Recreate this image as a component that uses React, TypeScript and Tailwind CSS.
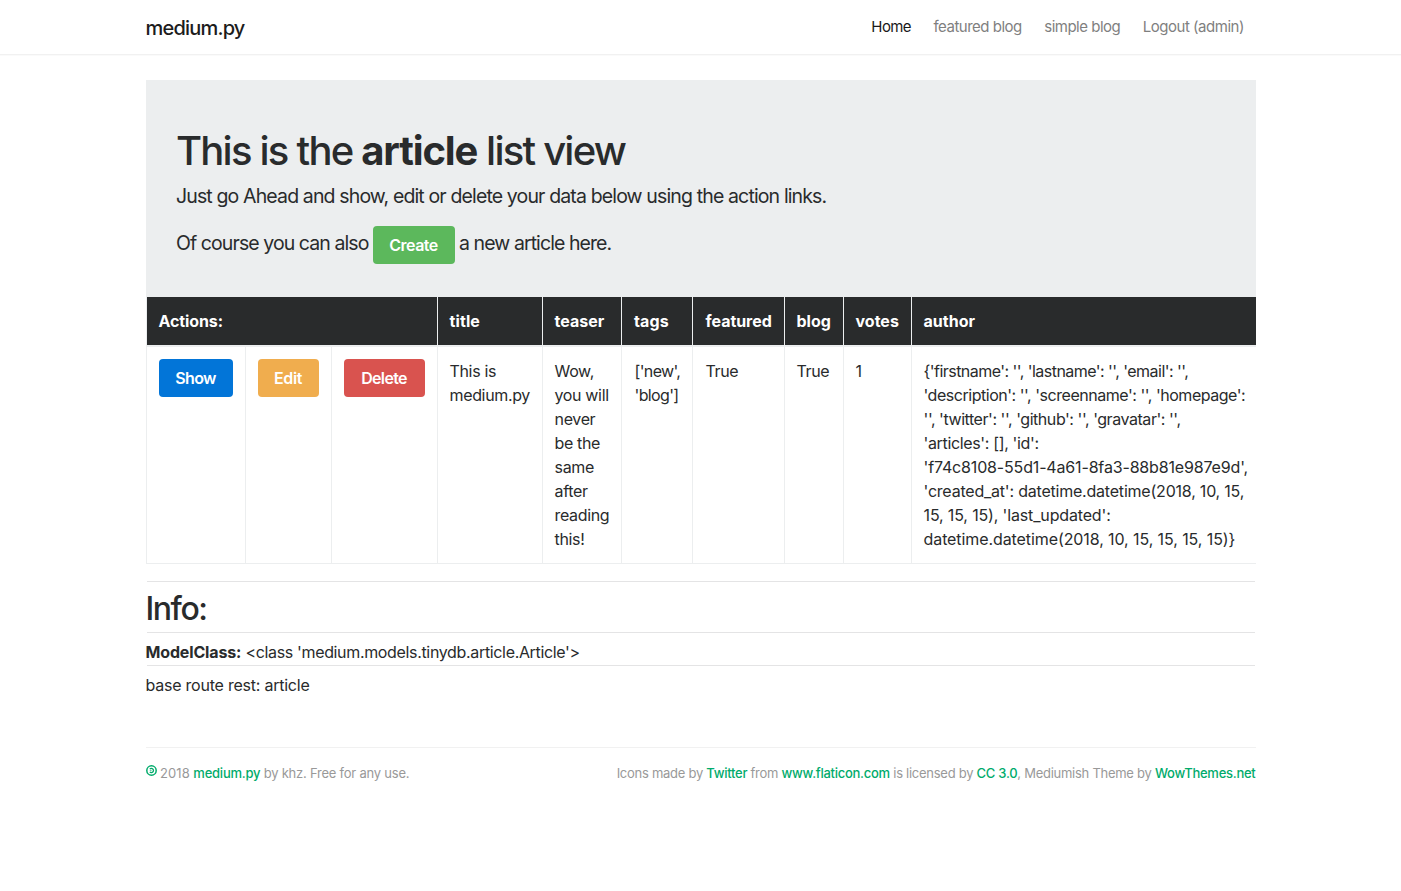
import type { ReactNode } from "react";

const columns = [
  { name: "title", style: "pl-3 tracking-[0.1px]" },
  { name: "teaser", style: "pl-3 tracking-[0px]" },
  { name: "tags", style: "pl-[12.5px] tracking-[0.1px]" },
  { name: "featured", style: "pl-[13px] tracking-[-0.05px]" },
  { name: "blog", style: "pl-3 tracking-[0px]" },
  { name: "votes", style: "pl-3 tracking-[0px]" },
  { name: "author", style: "pl-3 tracking-[0px]" },
];

const columnWidths = [99, 86, 106, 105, 79, 71, 92, 59, 68, 345];

const cells = [
  { style: "pl-3 tracking-[-0.35px]", lines: ["This is", "medium.py"] },
  {
    style: "pl-3 tracking-[-0.35px]",
    lines: ["Wow,", "you will", "never", "be the", "same", "after", "reading", "this!"],
  },
  { style: "pl-[13px] tracking-[-0.65px]", lines: ["['new',", "'blog']"] },
  { style: "pl-[13px] tracking-[-0.4px]", lines: ["True"] },
  { style: "pl-3 tracking-[-0.4px]", lines: ["True"] },
  { style: "pl-3 tracking-[-0.3px]", lines: ["1"] },
];

const authorLines = [
  { text: "{'firstname': '', 'lastname': '', 'email': '',", tracking: "tracking-[-0.54px]" },
  { text: "'description': '', 'screenname': '', 'homepage':", tracking: "tracking-[-0.47px]" },
  { text: "'', 'twitter': '', 'github': '', 'gravatar': '',", tracking: "tracking-[-0.45px]" },
  { text: "'articles': [], 'id':", tracking: "tracking-[-0.35px]" },
  { text: "'f74c8108-55d1-4a61-8fa3-88b81e987e9d',", tracking: "tracking-[-0.16px]" },
  { text: "'created_at': datetime.datetime(2018, 10, 15,", tracking: "tracking-[-0.21px]" },
  { text: "15, 15, 15), 'last_updated':", tracking: "tracking-[-0.15px]" },
  { text: "datetime.datetime(2018, 10, 15, 15, 15, 15)}", tracking: "tracking-[-0.09px]" },
];

function Button({ className, children }: { className: string; children: ReactNode }) {
  return (
    <a
      href="#"
      className={`inline-flex h-[38px] items-center justify-center rounded text-base font-semibold text-white ${className}`}
    >
      {children}
    </a>
  );
}

function FooterLink({ children }: { children: ReactNode }) {
  return (
    <a href="#" className="font-medium text-[#00ab6b]">
      {children}
    </a>
  );
}

function CopyleftIcon() {
  return (
    <svg width="11" height="11" viewBox="0 0 11 11" fill="none" stroke="#00ab6b" className="mr-[3.5px] mb-[5px]">
      <circle cx="5.5" cy="5.5" r="4.7" strokeWidth="1.5" />
      <path d="M3.8 4.1A2.1 2.1 0 1 1 3.8 6.9" strokeWidth="1.3" />
      <path d="M3.8 5.5H5.6" strokeWidth="0.6" />
    </svg>
  );
}

function Rule() {
  return <hr className="mx-px border-t border-[#e4e4e5]" />;
}

export default function App() {
  return (
    <div className="min-h-[891px] bg-white font-['Inter','Liberation_Sans',sans-serif] text-base leading-6 text-[#292b2c]">
      <header className="h-[55px] border-b border-[#f1f1f1] shadow-[0_1px_1px_rgba(0,0,0,0.02)]">
        <div className="mx-auto flex h-full w-[1110px] items-center justify-between">
          <a href="#" className="pt-[2px] text-xl font-medium tracking-[-0.8px] text-[#1c1c1c]">medium.py</a>
          <nav className="flex gap-[22.5px] pr-[11.5px] text-[15px] text-[#7f7f7f]">
            <a href="#" className="tracking-[-0.6px] text-[#191919]">Home</a>
            <a href="#" className="tracking-[-0.5px]">featured blog</a>
            <a href="#" className="tracking-[-0.5px]">simple blog</a>
            <a href="#" className="tracking-[-0.47px]">Logout (admin)</a>
          </nav>
        </div>
      </header>

      <main className="mx-auto mt-[25px] w-[1110px]">
        <section className="h-[217px] whitespace-nowrap bg-[#eceeef] px-[30.5px] pt-12">
          <h1 className="mb-2 text-[40px] leading-[46px] font-medium tracking-[-1.78px]">
            This is the <strong className="font-bold tracking-[-1.15px]">article</strong> list view
          </h1>
          <p className="mb-4 text-[19.5px] leading-7 tracking-[-0.86px]">
            Just go Ahead and show, edit or delete your data below using the action links.
          </p>
          <div className="flex text-[19.5px] tracking-[-0.92px]">
            <span className="w-[196.5px] pt-[5px]">Of course you can also</span>
            <Button className="mr-[4.5px] w-[82px] bg-[#5cb85c] tracking-[-0.5px]">Create</Button>
            <span className="pt-[5px]">a new article here.</span>
          </div>
        </section>

        <table className="w-[1110px] table-fixed border-separate border-spacing-0 whitespace-nowrap text-left">
          <colgroup>
            {columnWidths.map((width, i) => (
              <col key={i} style={{ width }} />
            ))}
          </colgroup>
          <thead>
            <tr className="bg-[#292b2c] text-white">
              <th colSpan={3} className="border-b-2 border-l border-[#eceeef] py-3 pl-3 font-bold tracking-[-0.1px]">
                Actions:
              </th>
              {columns.map(({ name, style }) => (
                <th key={name} className={`border-b-2 border-l border-[#eceeef] py-3 font-bold ${style}`}>
                  {name}
                </th>
              ))}
            </tr>
          </thead>
          <tbody>
            <tr className="align-top">
              <td className="border-b border-l border-[#eceeef] py-3 pl-3">
                <Button className="w-[74px] bg-[#0275d8] tracking-[-0.6px]">Show</Button>
              </td>
              <td className="border-b border-l border-[#eceeef] py-3 pl-3">
                <Button className="w-[61px] bg-[#f0ad4e] tracking-[-0.4px]">Edit</Button>
              </td>
              <td className="border-b border-l border-[#eceeef] py-3 pl-3">
                <Button className="w-[81px] bg-[#d9534f] pb-px tracking-[-0.65px]">Delete</Button>
              </td>
              {cells.map(({ style, lines }, i) => (
                <td key={i} className={`border-b border-l border-[#eceeef] py-3 ${style}`}>
                  {lines.map((line) => (
                    <div key={line}>{line}</div>
                  ))}
                </td>
              ))}
              <td className="border-b border-l border-[#eceeef] py-3 pl-3">
                {authorLines.map(({ text, tracking }) => (
                  <div key={text} className={tracking}>{text}</div>
                ))}
              </td>
            </tr>
          </tbody>
        </table>

        <section className="mt-[17px]">
          <Rule />
          <h2 className="h-[50px] pt-[9px] text-[32px] leading-9 font-medium tracking-[-1.45px]">Info:</h2>
          <Rule />
          <p className="h-8 pt-[7px] tracking-[-0.34px]">
            <strong className="font-bold tracking-[-0.15px]">ModelClass:</strong> &lt;class 'medium.models.tinydb.article.Article'&gt;
          </p>
          <Rule />
          <p className="pt-[7px] tracking-[-0.23px]">base route rest: article</p>
        </section>
      </main>

      <footer className="mx-auto mt-[50px] flex w-[1110px] justify-between border-t border-[#f1f1f1] pt-[13px] text-[13px] whitespace-nowrap text-[#999]">
        <p className="flex items-center tracking-[-0.23px]">
          <CopyleftIcon />
          <span><span className="tracking-[0.1px]">2018</span> <FooterLink>medium.py</FooterLink> by khz. Free for any use.</span>
        </p>
        <p className="tracking-[-0.27px]">
          Icons made by <FooterLink>Twitter</FooterLink> from <FooterLink>www.flaticon.com</FooterLink> is licensed by{" "}
          <FooterLink>CC 3.0</FooterLink>, Mediumish Theme by <FooterLink>WowThemes.net</FooterLink>
        </p>
      </footer>
    </div>
  );
}
